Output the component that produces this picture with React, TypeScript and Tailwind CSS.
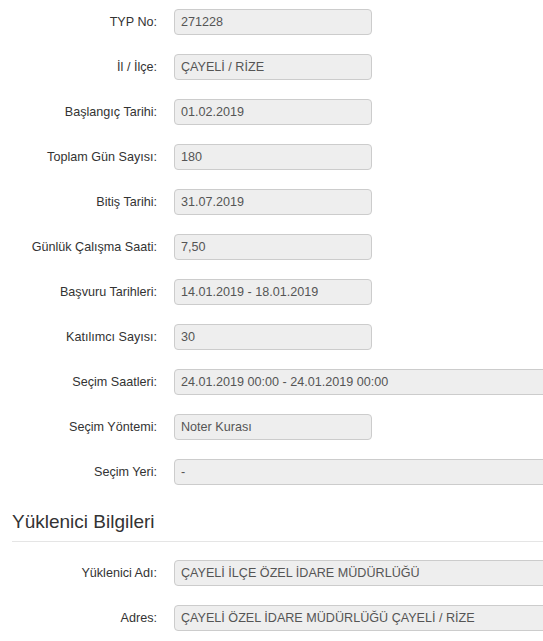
const rows: { label: string; value: string; wide?: boolean }[] = [
  { label: 'TYP No:', value: '271228' },
  { label: 'İl / İlçe:', value: 'ÇAYELİ / RİZE' },
  { label: 'Başlangıç Tarihi:', value: '01.02.2019' },
  { label: 'Toplam Gün Sayısı:', value: '180' },
  { label: 'Bitiş Tarihi:', value: '31.07.2019' },
  { label: 'Günlük Çalışma Saati:', value: '7,50' },
  { label: 'Başvuru Tarihleri:', value: '14.01.2019 - 18.01.2019' },
  { label: 'Katılımcı Sayısı:', value: '30' },
  { label: 'Seçim Saatleri:', value: '24.01.2019 00:00 - 24.01.2019 00:00', wide: true },
  { label: 'Seçim Yöntemi:', value: 'Noter Kurası' },
  { label: 'Seçim Yeri:', value: '-', wide: true },
]

const contractor = [
  { label: 'Yüklenici Adı:', value: 'ÇAYELİ İLÇE ÖZEL İDARE MÜDÜRLÜĞÜ' },
  { label: 'Adres:', value: 'ÇAYELİ ÖZEL İDARE MÜDÜRLÜĞÜ ÇAYELİ / RİZE' },
]

function Field({ label, value, wide }: { label: string; value: string; wide?: boolean }) {
  return (
    <div className="flex items-center h-[26px]">
      <div className="w-[157px] shrink-0 text-right text-[#333]">{label}</div>
      <div
        className={`ml-[17px] h-[26px] flex items-center pl-[6px] bg-[#eeeeee] border border-[#cccccc] rounded-[4px] text-[#555] whitespace-nowrap ${
          wide ? 'w-[400px] shrink-0' : 'w-[198px]'
        }`}
      >
        {value}
      </div>
    </div>
  )
}

export default function App() {
  return (
    <div
      className="w-[543px] h-[641px] overflow-hidden bg-white text-[12.6px]"
      style={{ fontFamily: '"Liberation Sans", Arial, sans-serif' }}
    >
      <div className="pt-[9px] flex flex-col gap-[19px]">
        {rows.map((r) => (
          <Field key={r.label} {...r} />
        ))}
      </div>

      {/* Yüklenici */}
      <div className="mt-[26px] ml-[12px] border-b border-[#e5e5e5] pb-[8px]">
        <h4 className="text-[19px] leading-[22px] text-[#333]">Yüklenici Bilgileri</h4>
      </div>
      <div className="pt-[18px] flex flex-col gap-[19px]">
        {contractor.map((r) => (
          <Field key={r.label} {...r} wide />
        ))}
      </div>
    </div>
  )
}
